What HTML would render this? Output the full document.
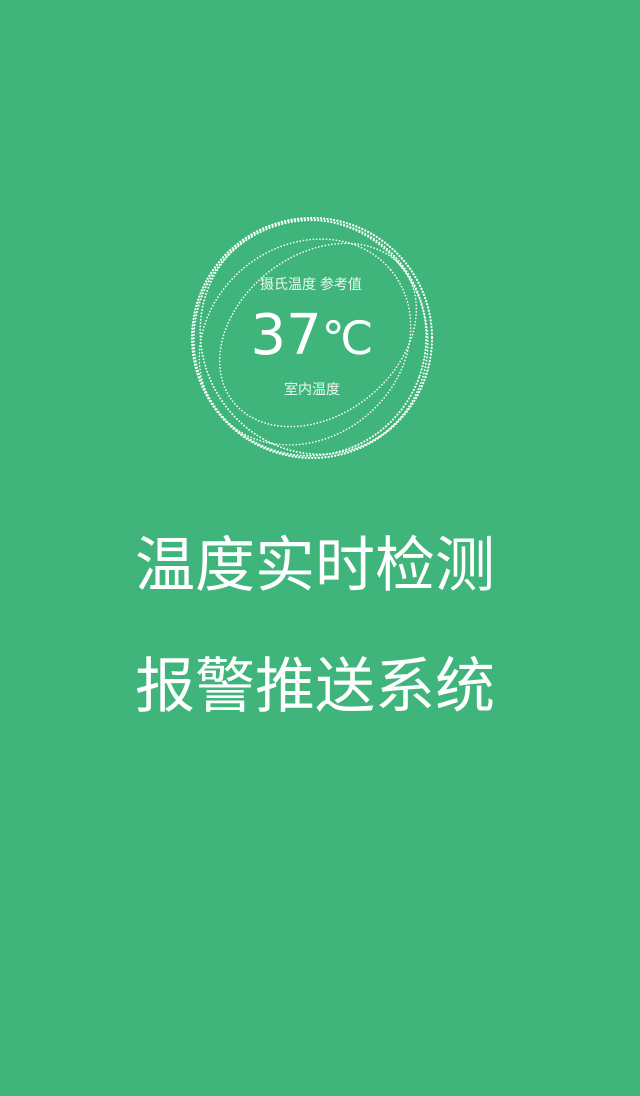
<!DOCTYPE html>
<html><head><meta charset="utf-8"><style>
html,body{margin:0;padding:0}
body{width:640px;height:1096px;background:#3fb57b;position:relative;overflow:hidden;font-family:"Liberation Sans","Noto Sans CJK SC",sans-serif;color:#fff}
.t{position:absolute;left:0;width:640px;text-align:center;white-space:nowrap}
</style></head><body>
<svg width="640" height="1096" style="position:absolute;left:0;top:0" fill="none" stroke="#fff" stroke-linecap="round">
 <g stroke-dasharray="0.1 3.2">
  <ellipse cx="312" cy="338" rx="120" ry="120" stroke-width="2.2"/>
  <ellipse cx="310" cy="338" rx="116" ry="118" stroke-width="2" transform="rotate(20 310 338)"/>
  <ellipse cx="314" cy="337" rx="112" ry="119" stroke-width="1.8" transform="rotate(-30 314 337)"/>
  <ellipse cx="318" cy="335" rx="108" ry="80" stroke-width="1.6" transform="rotate(-38 318 335)"/>
  <ellipse cx="305" cy="342" rx="112" ry="96" stroke-width="1.6" transform="rotate(-40 305 342)"/>
 </g>
</svg>
<div class="t" style="top:274px;left:-9px;font-size:14px;opacity:.9">摄氏温度 参考值</div>
<div class="t" style="top:303px;left:-8px;font-size:56px;line-height:66px;font-family:'DejaVu Sans','Liberation Sans',sans-serif">37<span style="font-size:46px">℃</span></div>
<div class="t" style="top:379px;left:-8px;font-size:14px;opacity:.9">室内温度</div>
<div class="t" style="top:530px;left:-5px;font-size:60px;line-height:72px">温度实时检测</div>
<div class="t" style="top:651px;left:-5px;font-size:60px;line-height:72px">报警推送系统</div>
</body></html>
